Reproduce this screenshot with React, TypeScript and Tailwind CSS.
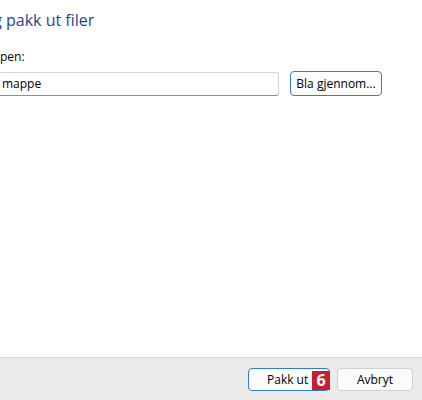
import React from "react";

const font = { fontFamily: '"Open Sans", "Noto Sans", "Liberation Sans", sans-serif' };

function Cut({ prefix, rest, edge, gap }: { prefix: string; rest: string; edge: string; gap: string }) {
  return (
    <div className="flex whitespace-pre">
      <span className={`${edge} flex justify-end shrink-0`}>
        <span className="shrink-0">{prefix}</span>
      </span>
      <span className={gap}>{rest}</span>
    </div>
  );
}

export default function App() {
  return (
    <div
      className="w-[422px] h-[400px] bg-white overflow-hidden flex flex-col text-black"
      style={font}
    >
      <div className="flex-1 flex flex-col">
        <div className="pt-[8px] text-[16px] leading-[24px] text-[#1f4596]">
          <Cut prefix="Velg et mål og" rest="pakk ut filer" edge="w-[2px]" gap="ml-[4px]" />
        </div>
        <div className="mt-[17px] text-[12px] leading-[16px]">
          <Cut prefix="Filer pakkes ut til denne map" rest="pen:" edge="w-[0px]" gap="" />
        </div>
        <div className="mt-[6px] flex items-center">
          <div className="w-[279px] h-[24px] border border-[#d4d4d4] border-b-[#8c8c8c] border-l-0 rounded-r-[3px] flex items-center text-[12px] overflow-hidden">
            <Cut prefix="C:\Users\Bruker\Downloads" rest="mappe" edge="w-[0px]" gap="ml-[2px]" />
          </div>
          <button className="ml-[11px] w-[92px] h-[25px] border border-[#2e7dd1] rounded-[4px] bg-[#fdfdfd] text-[12px] leading-none flex items-center justify-center">
            Bla gjennom...
          </button>
        </div>
      </div>
      <div className="h-[43px] bg-[#ebebea] border-t border-[#d6d6d4] flex items-start pt-[10px]">
        <div className="ml-[248px] relative">
          <button className="w-[82px] h-[23px] border border-[#2e7dd1] rounded-[4px] bg-[#fdfdfd] text-[12px] leading-none flex items-center pl-[18px]">
            Pakk ut
          </button>
          <div className="absolute left-[64px] top-[3px] w-[18px] h-[19px] bg-[#c71f32] text-white font-bold text-[16px] leading-[19px] flex items-center justify-center">
            6
          </div>
        </div>
        <button className="ml-[7px] w-[76px] h-[23px] border border-[#d0d0d0] rounded-[4px] bg-[#fbfbfb] text-[12px] leading-none flex items-center justify-center">
          Avbryt
        </button>
      </div>
    </div>
  );
}
